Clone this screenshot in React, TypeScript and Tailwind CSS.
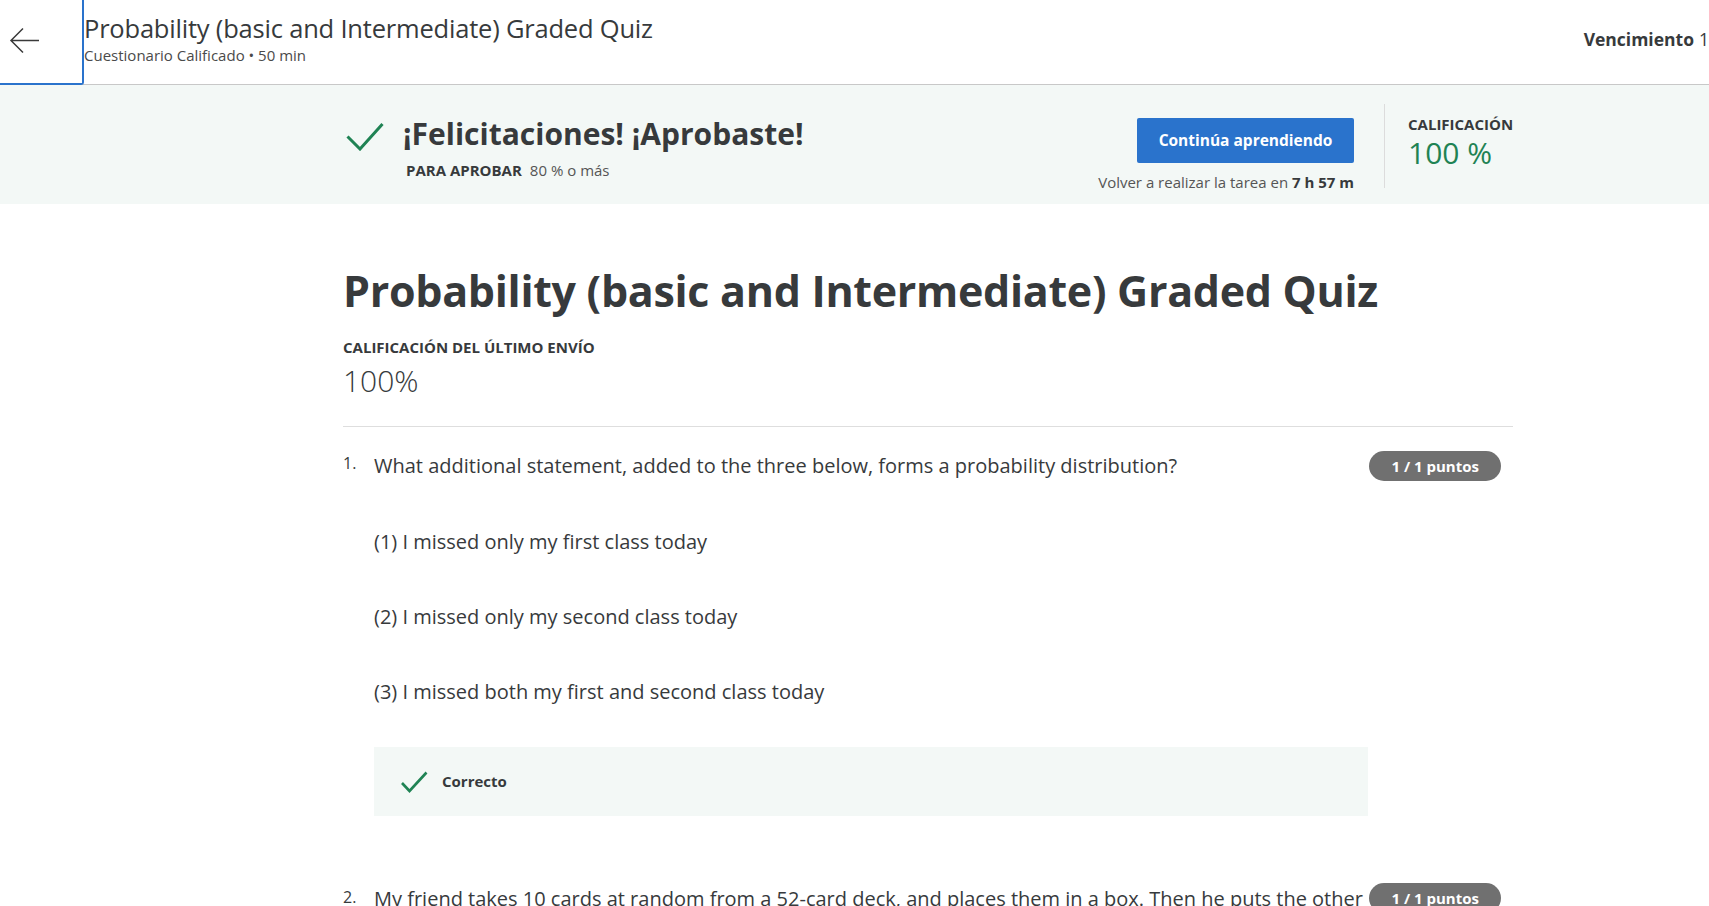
import React from 'react';

const BigCheck = () => (
  <svg viewBox="0 0 38 29" className="h-[29px] w-[38px] text-[#1f8354]" fill="none" stroke="currentColor" strokeWidth="3">
    <path d="M1.5 14.5L14 27L36.5 2" />
  </svg>
);

const SmallCheck = () => (
  <svg viewBox="0 0 27 22" className="h-[22px] w-[27px] text-[#1f8354]" fill="none" stroke="currentColor" strokeWidth="2.6">
    <path d="M1 12L8.5 20L25.5 1.5" />
  </svg>
);

const Badge = () => (
  <span className="inline-block shrink-0 rounded-full bg-[#707070] px-[22px] py-[5px] text-[15px] font-bold leading-[20px] whitespace-nowrap text-white">
    1 / 1 puntos
  </span>
);

const options = [
  '(1) I missed only my first class today',
  '(2) I missed only my second class today',
  '(3) I missed both my first and second class today',
];

export default function App() {
  return (
    <div className="min-h-screen bg-white text-[#373a3c]" style={{ fontFamily: '"Open Sans", sans-serif' }}>
      {/* barra superior */}
      <header className="flex h-[85px] border-b border-[#c8c8c8]">
        <button className="-mb-px flex w-[84px] shrink-0 items-center rounded-br-[3px] border-r-2 border-b-2 border-[#2a73cc] pl-[9px]">
          <svg viewBox="0 0 31 27" className="mt-[-3px] h-[27px] w-[31px]" fill="none" stroke="#3a3a3a" strokeWidth="1.5">
            <path d="M30 13.5H2M14 1.5L2 13.5l12 12" />
          </svg>
        </button>
        <div className="flex flex-col pt-[11px]">
          <h1 className="text-[25.5px] leading-[34px] tracking-[-0.2px]">Probability (basic and Intermediate) Graded Quiz</h1>
          <p className="text-[15px] leading-[20px] text-[#4a4a4a]">Cuestionario Calificado • 50 min</p>
        </div>
        <div className="ml-auto flex items-start whitespace-nowrap pt-[26px] text-[17.5px] text-[#373a3c]">
          <span className="font-bold">Vencimiento</span>
          <span className="ml-[5px]">1</span>
        </div>
      </header>

      {/* resultado */}
      <section className="bg-[#f3f8f6]">
        <div className="ml-[343px] flex h-[119px] w-[1170px]">
          <div className="flex pt-[31px]">
            <div className="pt-[6px] pl-[3px]">
              <BigCheck />
            </div>
            <div className="ml-[19px]">
              <h2 className="text-[30px] font-bold leading-[36px]">¡Felicitaciones! ¡Aprobaste!</h2>
              <p className="mt-[8px] pl-[3px] text-[15px] leading-[20px]">
                <span className="font-bold">PARA APROBAR</span>
                <span className="ml-[8px] text-[#555]">80 % o más</span>
              </p>
            </div>
          </div>
          <div className="ml-auto flex flex-col items-end pt-[33px]">
            <button className="h-[45px] w-[217px] rounded-[2px] bg-[#2a73cc] text-[15.5px] font-bold text-white">
              Continúa aprendiendo
            </button>
            <p className="mt-[8px] text-[15px] text-[#555]">
              Volver a realizar la tarea en <span className="font-bold text-[#373a3c]">7 h 57 m</span>
            </p>
          </div>
          <div className="mr-[23px] ml-[30px] mt-[19px] h-[84px] border-l border-[#dcdcdc]" />
          <div className="w-[105px] pt-[29px]">
            <p className="text-[15px] font-bold leading-[20px]">CALIFICACIÓN</p>
            <p className="text-[30px] leading-[38px] text-[#1f8354]">100 %</p>
          </div>
        </div>
      </section>

      {/* contenido */}
      <main className="ml-[343px] w-[1170px] pt-[59px]">
        <h1 className="text-[43px] font-bold leading-[56px] tracking-[-0.3px]">Probability (basic and Intermediate) Graded Quiz</h1>
        <p className="mt-[18px] text-[15px] font-bold leading-[20px]">CALIFICACIÓN DEL ÚLTIMO ENVÍO</p>
        <p className="mt-[5px] text-[30px] font-light leading-[38px]">100%</p>
        <div className="mt-[26px] border-t border-[#dedede]" />

        <div className="pt-[22px]">
          <div className="flex items-start">
            <span className="w-[31px] shrink-0 text-[16px] leading-[28px]">1.</span>
            <p className="flex-1 pt-[3px] text-[20px] leading-[28px]">
              What additional statement, added to the three below, forms a probability distribution?
            </p>
            <div className="mr-[12px] pt-[2px]">
              <Badge />
            </div>
          </div>
          <div className="ml-[31px] mr-[145px]">
            {options.map((o) => (
              <p key={o} className="mt-[47px] text-[20px] leading-[28px]">
                {o}
              </p>
            ))}
            <div className="mt-[41px] flex h-[69px] items-center bg-[#f3f8f6] pl-[27px]">
              <SmallCheck />
              <span className="ml-[14px] text-[15px] font-bold">Correcto</span>
            </div>
          </div>
        </div>

        <div className="mt-[67px] flex items-start">
          <span className="w-[31px] shrink-0 text-[16px] leading-[28px]">2.</span>
          <p className="flex-1 pt-[2px] text-[20px] leading-[28px]">
            My friend takes 10 cards at random from a 52-card deck, and places them in a box. Then he puts the other
          </p>
          <div className="mr-[12px]">
            <Badge />
          </div>
        </div>
      </main>
    </div>
  );
}
